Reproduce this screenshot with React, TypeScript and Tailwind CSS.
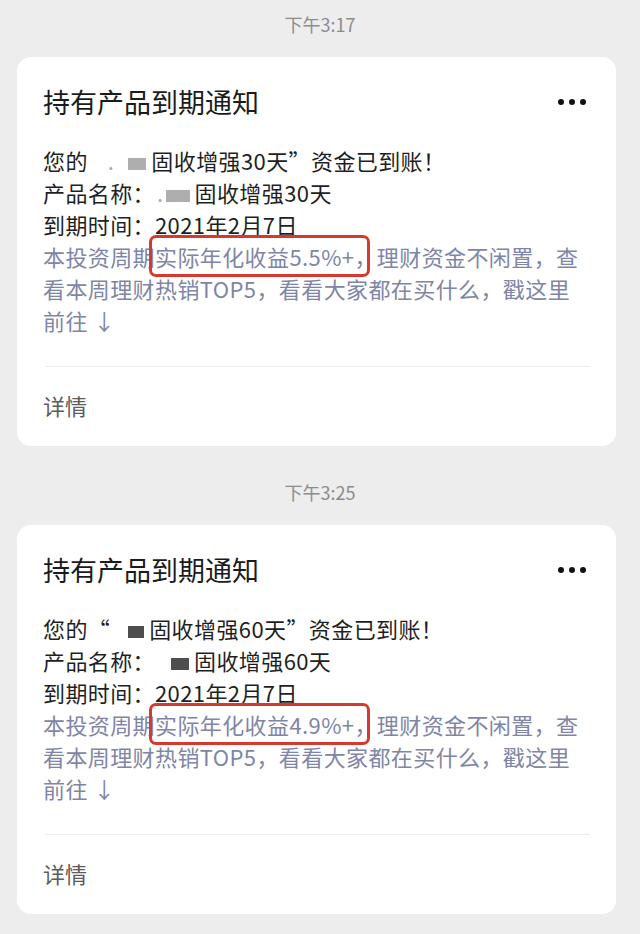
import React from 'react';

type Notice = {
  time: string;
  days: string;
  rate: string;
  quoteOpen: boolean;
  blockColor: string;
};

const notices: Notice[] = [
  { time: '下午3:17', days: '30', rate: '5.5%+', quoteOpen: false, blockColor: 'bg-[#9a9a9a]' },
  { time: '下午3:25', days: '60', rate: '4.9%+', quoteOpen: true, blockColor: 'bg-[#222222]' },
];

const Masked = ({ color, pre, w }: { color: string; pre: string; w: string }) => (
  <span className="inline-flex items-center align-middle">
    <span className={`inline-block ${pre}`} />
    <span className={`inline-block h-[12px] ${w} ${color} opacity-80`} />
    <span className="inline-block w-[5px]" />
  </span>
);

const MoreDots = () => (
  <div className="flex items-center gap-[5px]">
    <span className="w-[6px] h-[6px] rounded-full bg-[#111]" />
    <span className="w-[6px] h-[6px] rounded-full bg-[#111]" />
    <span className="w-[6px] h-[6px] rounded-full bg-[#111]" />
  </div>
);

const NoticeCard = ({ n }: { n: Notice }) => (
  <div className="ml-[17px] mr-[24px] bg-white rounded-[14px] pt-[27px] pb-[25px]">
    <div className="flex items-center justify-between pl-[26px] pr-[30px] h-[36px]">
      <div className="text-[27px] leading-[36px] text-[#1b1b1b]">持有产品到期通知</div>
      <MoreDots />
    </div>
    <div className="mt-[24px] pl-[26px] pr-[20px] text-[22px] leading-[32px] tracking-[0.4px] text-[#1f1f1f]">
      <div>
        您的{n.quoteOpen ? '“' : ''}
        {!n.quoteOpen && <span className="text-[#aaa] ml-[20px]">.</span>}
        {n.quoteOpen ? (
          <Masked color={n.blockColor} pre="w-[18px]" w="w-[16px]" />
        ) : (
          <Masked color={n.blockColor} pre="w-[14px]" w="w-[18px]" />
        )}
        固收增强{n.days}天”资金已到账！
      </div>
      <div>
        产品名称：
        {!n.quoteOpen && <span className="text-[#aaa] ml-[2px]">.</span>}
        {n.quoteOpen ? (
          <Masked color={n.blockColor} pre="w-[16px]" w="w-[18px]" />
        ) : (
          <Masked color={n.blockColor} pre="w-[2px]" w="w-[24px]" />
        )}
        固收增强{n.days}天
      </div>
      <div>到期时间：2021年2月7日</div>
      <div className="text-[#7f85a6]">
        本投资周期
        <span className="relative">
          实际年化收益{n.rate}
          <span className="absolute -left-[6px] -right-[16px] -top-[5px] -bottom-[5px] border-[3px] border-[#d63a2e] rounded-[7px]" />
        </span>
        ，理财资金不闲置，查
        <br />
        看本周理财热销TOP5，看看大家都在买什么，戳这里
        <br />
        前往 ↓
      </div>
    </div>
    <div className="mt-[30px] ml-[28px] mr-[26px] h-px bg-[#ececec]" />
    <div className="mt-[22px] pl-[26px] text-[22px] leading-[32px] text-[#5c5c5c]">详情</div>
  </div>
);

export default function App() {
  return (
    <div className="min-h-[934px] w-[640px] bg-[#ededed] font-['Noto_Sans_CJK_SC',sans-serif] pt-[12px]">
      {notices.map((n, i) => (
        <div key={i} className={i > 0 ? 'mt-[34px]' : ''}>
          <div className="text-center text-[18px] leading-[24px] text-[#8c8c8c] mb-[21px]">{n.time}</div>
          <NoticeCard n={n} />
        </div>
      ))}
    </div>
  );
}
